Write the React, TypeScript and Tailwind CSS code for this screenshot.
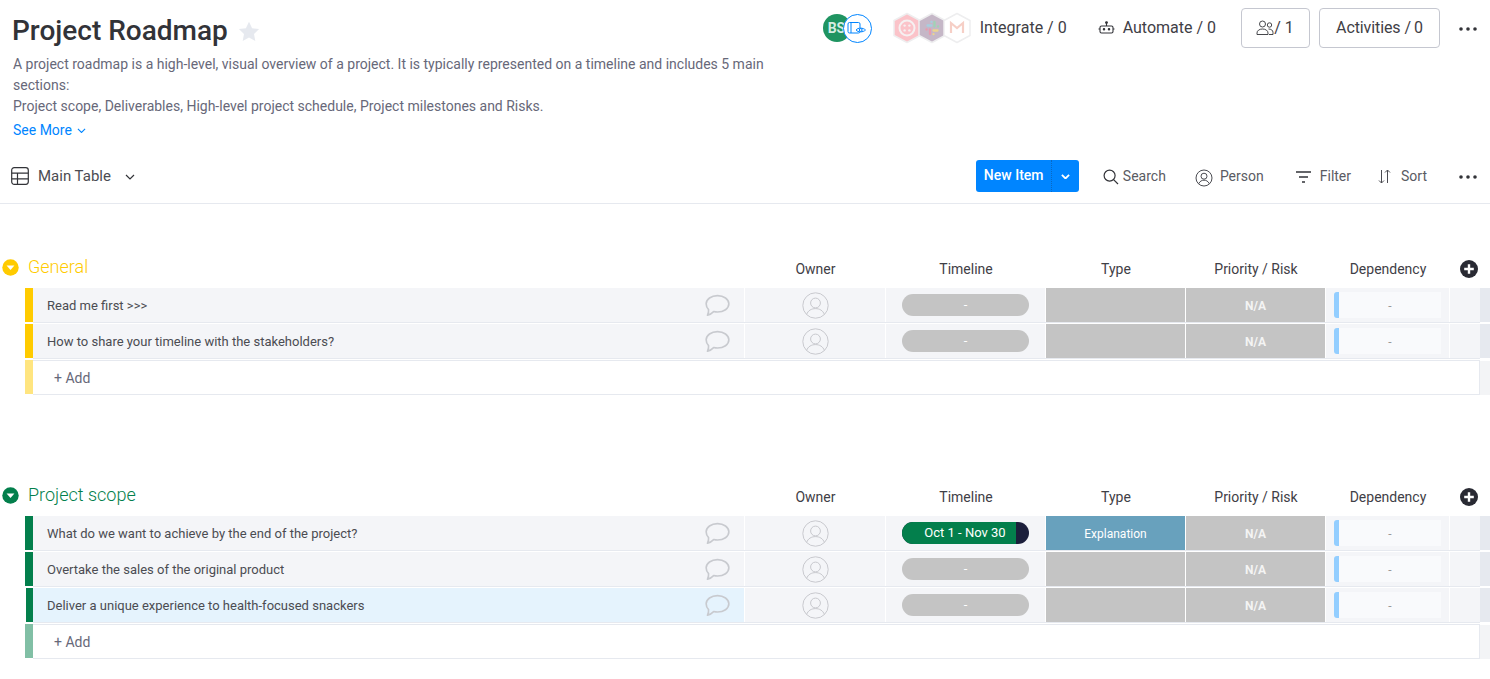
import React from "react";

const Hex = ({ fill, children, className }: { fill: string; children?: React.ReactNode; className?: string }) => (
  <svg width="30" height="32" viewBox="0 0 30 32" className={className}>
    <path d="M15 1.5 L28 8.5 V23.5 L15 30.5 L2 23.5 V8.5 Z" fill={fill} stroke="#eeeeef" strokeWidth="1.5" strokeLinejoin="round" />
    {children}
  </svg>
);

const Dots = () => (
  <svg width="18" height="4" viewBox="0 0 18 4"><circle cx="2" cy="2" r="1.8" fill="#323338" /><circle cx="9" cy="2" r="1.8" fill="#323338" /><circle cx="16" cy="2" r="1.8" fill="#323338" /></svg>
);

const Chevron = ({ className = "", w = 10, color = "#323338", sw = 1.2 }: { className?: string; w?: number; color?: string; sw?: number }) => (
  <svg width={w} height={w * 0.6} viewBox="0 0 10 6" className={className}><path d="M1 1 L5 5 L9 1" fill="none" stroke={color} strokeWidth={sw} /></svg>
);

const Bubble = () => (
  <svg width="25" height="23" viewBox="0 0 26 23"><path d="M13 1.2 C19.5 1.2 24.8 4.9 24.8 9.8 C24.8 14.7 19.5 18.3 13 18.3 C11.6 18.3 10.3 18.1 9 17.8 C7.4 19.4 5.3 20.9 2.6 21.6 C3.5 20 3.9 18.2 3.7 15.7 C2.1 14.2 1.2 12.1 1.2 9.8 C1.2 4.9 6.5 1.2 13 1.2 Z" fill="none" stroke="#c8cacf" strokeWidth="1.7" strokeLinejoin="round" /></svg>
);

const Avatar = () => (
  <svg width="27" height="27" viewBox="0 0 27 27">
    <circle cx="13.5" cy="13.5" r="12.7" fill="none" stroke="#c8c9ce" strokeWidth="1" />
    <circle cx="13.5" cy="11" r="4.9" fill="none" stroke="#c8c9ce" strokeWidth="1" />
    <path d="M4.6 22.5 C6 18.5 9.5 16.6 13.5 16.6 C17.5 16.6 21 18.5 22.4 22.5" fill="none" stroke="#c8c9ce" strokeWidth="1" />
  </svg>
);

const Plus = () => (
  <svg width="18" height="18" viewBox="0 0 18 18"><circle cx="9" cy="9" r="9" fill="#292a33" /><path d="M9 4.2 V13.8 M4.2 9 H13.8" stroke="#fff" strokeWidth="2.4" /></svg>
);

const Row = ({ color, name, selected, timeline, type }: { color: string; name: string; selected?: boolean; timeline?: string; type?: string }) => (
  <div className="flex h-[36px] pr-[10px] relative">
    <div className="h-[34px] w-[8px] shrink-0 flex justify-end">
      <div className={`h-full ${selected ? "w-[7px]" : "w-[8px]"}`} style={{ background: color }} />
    </div>
    <div className={`w-[711px] h-[34px] flex items-center justify-between pl-[14px] pr-[14px] text-[13px] text-[#4b4c52] ${selected ? "bg-[#e5f3fd]" : "bg-[#f4f5f8]"}`}>
      <span className="pt-[2px]">{name}</span>
      <Bubble />
    </div>
    <div className="w-[140px] h-[34px] ml-[1px] bg-[#f4f5f8] flex items-center justify-center"><Avatar /></div>
    <div className="w-[159px] h-[34px] ml-[1px] bg-[#f4f5f8] flex items-center justify-center">
      {timeline ? (
        <div className="w-[127px] h-[22px] rounded-full overflow-hidden flex text-white text-[13px] leading-[22px] bg-[#1c1f3b]">
          <div className="w-[114px] bg-[#037f4c] text-center pl-[13px] pr-[1px] whitespace-nowrap">{timeline}</div>
        </div>
      ) : (
        <div className="w-[127px] h-[22px] rounded-full bg-[#c4c4c4] text-white text-[13px] leading-[22px] text-center">-</div>
      )}
    </div>
    <div className={`w-[139px] h-[35px] ml-[1px] flex items-center justify-center text-white text-[12px] ${type ? "bg-[#68a1bd]" : "bg-[#c4c4c4] border-b border-[#b5b5b5]"}`}>{type}</div>
    <div className="w-[139px] h-[35px] ml-[1px] pt-[1px] bg-[#c4c4c4] border-b border-[#b5b5b5] flex items-center justify-center text-[#f4f4f4] text-[12px] font-bold">N/A</div>
    <div className="w-[123px] h-[34px] ml-[1px] bg-[#f4f5f8] flex items-center pl-[8px]">
      <div className="w-[5px] h-[26px] bg-[#93ceff] rounded-l-[3px]" />
      <div className="w-[102px] h-[26px] pt-[2px] bg-[#f9fafc] flex items-center justify-center text-[12px] text-[#9a9a9a]">-</div>
    </div>
    <div className="w-[30px] h-[34px] ml-[1px] bg-[#f4f5f8] shrink-0" />
    <div className="w-[10px] h-[34px] absolute right-0 top-0 bg-[#e6e9ef]" />
    <div className="absolute left-[8px] right-[10px] top-[34px] h-[1px] bg-[#e6e9ef]" />
  </div>
);

const Group = ({ title, color, light, titleColor, rows, className }: { title: string; color: string; light: string; titleColor: string; rows: { name: string; selected?: boolean; timeline?: string; type?: string }[]; className: string }) => (
  <section className={className}>
    <div className="flex items-center h-[26px] mb-[9px]">
      <svg width="17" height="17" viewBox="0 0 17 17" className="ml-[2px] shrink-0 mt-[2px]"><circle cx="8.5" cy="8.5" r="8.2" fill={color} /><path d="M4.6 6.6 H12.4 L8.5 11 Z" fill="#fff" /></svg>
      <h2 className="w-[726px] pl-[9px] text-[18px] font-light" style={{ color: titleColor }}>{title}</h2>
      <div className="flex text-[14px] text-[#3f4046] text-center mt-[6px]">
        <div className="w-[141px]">Owner</div>
        <div className="w-[160px]">Timeline</div>
        <div className="w-[140px]">Type</div>
        <div className="w-[140px]">Priority / Risk</div>
        <div className="w-[124px]">Dependency</div>
      </div>
      <div className="ml-[10px] mt-[6px] flex"><Plus /></div>
    </div>
    <div className="pl-[25px]">
      {rows.map((r) => <Row key={r.name} color={color} {...r} />)}
      <div className="flex h-[35px]">
        <div className="w-[8px] h-[34px]" style={{ background: light }} />
        <div className="flex-1 h-[35px] pt-[2px] border-b border-t border-r border-[#e6e9ef] pl-[21px] flex items-center text-[14px] text-[#676879]">+ Add</div>
        <div className="w-[10px] h-[34px] mt-[1px] bg-[#f3f4f6]" />
      </div>
    </div>
  </section>
);

export default function App() {
  return (
    <div className="w-[1490px] h-[679px] overflow-hidden bg-white text-[#323338]" style={{ fontFamily: "Roboto, 'Open Sans', sans-serif" }}>
      <header className="flex justify-between h-[152px] pl-[13px] pr-[13px]">
        <div className="w-[775px] pt-[12px]">
          <div className="flex items-center h-[38px]">
            <h1 className="text-[28px] font-medium -ml-[1px] text-[#323338]">Project Roadmap</h1>
            <svg width="22" height="21" viewBox="0 0 22 21" className="ml-[10px]"><path d="M11 .8 L14.1 7.2 L21.1 8.1 L16 13 L17.3 20 L11 16.6 L4.7 20 L6 13 L.9 8.1 L7.9 7.2 Z" fill="#e6e9ef" /></svg>
          </div>
          <p className="mt-[4px] text-[14px] leading-[21px] text-[#676879]">A project roadmap is a high-level, visual overview of a project. It is typically represented on a timeline and includes 5 main sections:<br />Project scope, Deliverables, High-level project schedule, Project milestones and Risks.</p>
          <div className="flex items-center mt-[3px] text-[14px] leading-[20px] text-[#0085ff]">See More<Chevron className="ml-[5px] mt-[1px]" w={9} color="#0085ff" /></div>
        </div>
        <div className="flex items-start pt-[8px]">
          <div className="flex items-center h-[40px] mr-[20px]">
            <div className="w-[28px] h-[28px] rounded-full bg-[#1f9461] text-[#d6ece2] text-[14px] font-bold leading-[28px] pl-[5px]">BS</div>
            <div className="w-[29px] h-[29px] -ml-[8px] rounded-full bg-white border border-[#0085ff] flex items-center justify-center">
              <svg width="20" height="14" viewBox="0 0 20 14" fill="none" stroke="#0085ff" strokeWidth="1"><rect x="1" y="1.5" width="12" height="10.5" rx="1.5" /><path d="M4 1.5 V12" /><path d="M9 9 C11 6.5 16 6.5 18.5 9 C16 11.5 11 11.5 9 9 Z" fill="#fff" /><circle cx="13.7" cy="9" r="1.4" /></svg>
            </div>
          </div>
          <div className="flex items-center h-[40px] text-[16px] text-[#3f4046]">
            <Hex fill="#fbc3c9"><circle cx="15" cy="16" r="7.5" fill="none" stroke="#f6f0f1" strokeWidth="2" /><circle cx="12.6" cy="13.6" r="1.2" fill="#f6f0f1" /><circle cx="17.4" cy="13.6" r="1.2" fill="#f6f0f1" /><circle cx="12.6" cy="18.4" r="1.2" fill="#f6f0f1" /><circle cx="17.4" cy="18.4" r="1.2" fill="#f6f0f1" /></Hex>
            <Hex fill="#c5b7c7" className="-ml-[5px]"><g strokeWidth="2.3" strokeLinecap="round" fill="none"><path d="M10.5 13.5 H14.5 M14.5 9.8 V9.9" stroke="#a6cfe0" /><path d="M17.5 10 V14.5 M21 14.5 H21.1" stroke="#9fd3b5" /><path d="M16.5 18.5 H20.5 M16.5 22.2 V22.1" stroke="#ecd48f" /><path d="M13 17.5 V22 M9.5 17.5 H9.6" stroke="#e89bae" /></g></Hex>
            <Hex fill="#ffffff" className="-ml-[5px]"><path d="M9 21 V11 L15 16 L21 11 V21" fill="none" stroke="#f6cfc6" strokeWidth="2.2" /></Hex>
            <span className="ml-[8px]">Integrate / 0</span>
          </div>
          <div className="flex items-center h-[40px] ml-[31px] text-[16px] text-[#3f4046]">
            <svg width="17" height="14" viewBox="0 0 17 14" fill="none" stroke="#323338" strokeWidth="1.1"><rect x="2" y="5" width="13" height="7" rx="1.5" /><path d="M8.5 5 V2 M0.5 8 H2 M15 8 H16.5" /><circle cx="8.5" cy="1.6" r="0.9" fill="#323338" /><circle cx="6" cy="8.3" r="0.7" fill="#323338" /><circle cx="11" cy="8.3" r="0.7" fill="#323338" /></svg>
            <span className="ml-[8px]">Automate / 0</span>
          </div>
          <div className="w-[69px] h-[40px] ml-[25px] flex items-center justify-center rounded-[4px] border border-[#c5c7d0] text-[16px] text-[#3f4046] pr-[1px]">
            <svg width="18" height="16" viewBox="0 0 18 16" fill="none" stroke="#323338" strokeWidth="0.9"><circle cx="6.5" cy="4" r="3" /><path d="M1 14.5 V13 C1 10.5 3.5 9 6.5 9 C9.5 9 12 10.5 12 13 V14.5 Z" /><circle cx="13.5" cy="5" r="2.2" /><path d="M12.5 9 C15 9 17 10.2 17 12.5 V14.5 H13" /></svg>
            <span>/ 1</span>
          </div>
          <div className="w-[121px] h-[40px] ml-[9px] flex items-center justify-center rounded-[4px] border border-[#c5c7d0] text-[16px] text-[#3f4046] tracking-[-0.1px]">Activities /&thinsp;0</div>
          <div className="ml-[19px] h-[40px] flex items-center mt-[1px]"><Dots /></div>
        </div>
      </header>
      <nav className="flex items-center justify-between h-[52px] border-b border-[#e6e9ef] pl-[11px] pr-[13px] pb-[2px]">
        <div className="flex items-center text-[#4b4c52]">
          <svg width="18" height="18" viewBox="0 0 18 18" fill="none" stroke="#323338" strokeWidth="1.2" className="-mt-[2px]"><rect x="0.7" y="0.7" width="16.6" height="16.6" rx="2.5" /><path d="M0.7 6.2 H17.3 M0.7 11.8 H17.3 M6.5 6.2 V17.3" /></svg>
          <span className="ml-[9px] text-[15px]">Main Table</span>
          <Chevron className="ml-[14px]" w={10} />
        </div>
        <div className="flex items-center text-[14px] text-[#5a5b63]">
          <div className="flex items-center w-[103px] h-[32px] -mt-[2px] rounded-[3px] bg-[#0085ff] text-white font-medium">
            <span className="w-[75px] pl-[8px] text-[14px]">New Item</span>
            <div className="w-px h-full border-l border-dotted border-[#0a69c2]" />
            <Chevron className="ml-[9px] mt-[2px]" w={9} color="#fff" sw={2} />
          </div>
          <div className="flex items-center ml-[24px]">
            <svg width="16" height="16" viewBox="0 0 16 16" fill="none" stroke="#323338" strokeWidth="1.2"><circle cx="6.6" cy="6.6" r="5.5" /><path d="M10.6 10.6 L15 15" /></svg>
            <span className="ml-[4px]">Search</span>
          </div>
          <div className="flex items-center ml-[29px]">
            <svg width="18" height="18" viewBox="0 0 18 18" fill="none" stroke="#4b4c52" strokeWidth="1" className="mt-[2px]"><circle cx="9" cy="9" r="8" /><circle cx="9" cy="7.2" r="3" /><path d="M3.6 14.8 C5 12 7 11.2 9 11.2 C11 11.2 13 12 14.4 14.8" /></svg>
            <span className="ml-[7px]">Person</span>
          </div>
          <div className="flex items-center ml-[32px]">
            <svg width="15" height="12" viewBox="0 0 15 12" stroke="#323338" strokeWidth="1.5"><path d="M0 1 H15 M3 6 H12 M6 11 H9" /></svg>
            <span className="ml-[9px]">Filter</span>
          </div>
          <div className="flex items-center ml-[27px]">
            <svg width="13" height="15" viewBox="0 0 13 15" fill="none" stroke="#4b4c52" strokeWidth="1"><path d="M3.5 1 V14 M1 11.5 L3.5 14 L6 11.5 M9.5 14 V1 M7 3.5 L9.5 1 L12 3.5" /></svg>
            <span className="ml-[10px]">Sort</span>
          </div>
          <div className="ml-[32px]"><Dots /></div>
        </div>
      </nav>
      <Group className="mt-[49px]" title="General" color="#ffcb00" light="#ffe580" titleColor="#ffcb00" rows={[{ name: "Read me first >>>" }, { name: "How to share your timeline with the stakeholders?" }]} />
      <Group className="mt-[86px]" title="Project scope" color="#037f4c" light="#81bfa5" titleColor="#037f4c" rows={[{ name: "What do we want to achieve by the end of the project?", timeline: "Oct 1 - Nov 30", type: "Explanation" }, { name: "Overtake the sales of the original product" }, { name: "Deliver a unique experience to health-focused snackers", selected: true }]} />
    </div>
  );
}
